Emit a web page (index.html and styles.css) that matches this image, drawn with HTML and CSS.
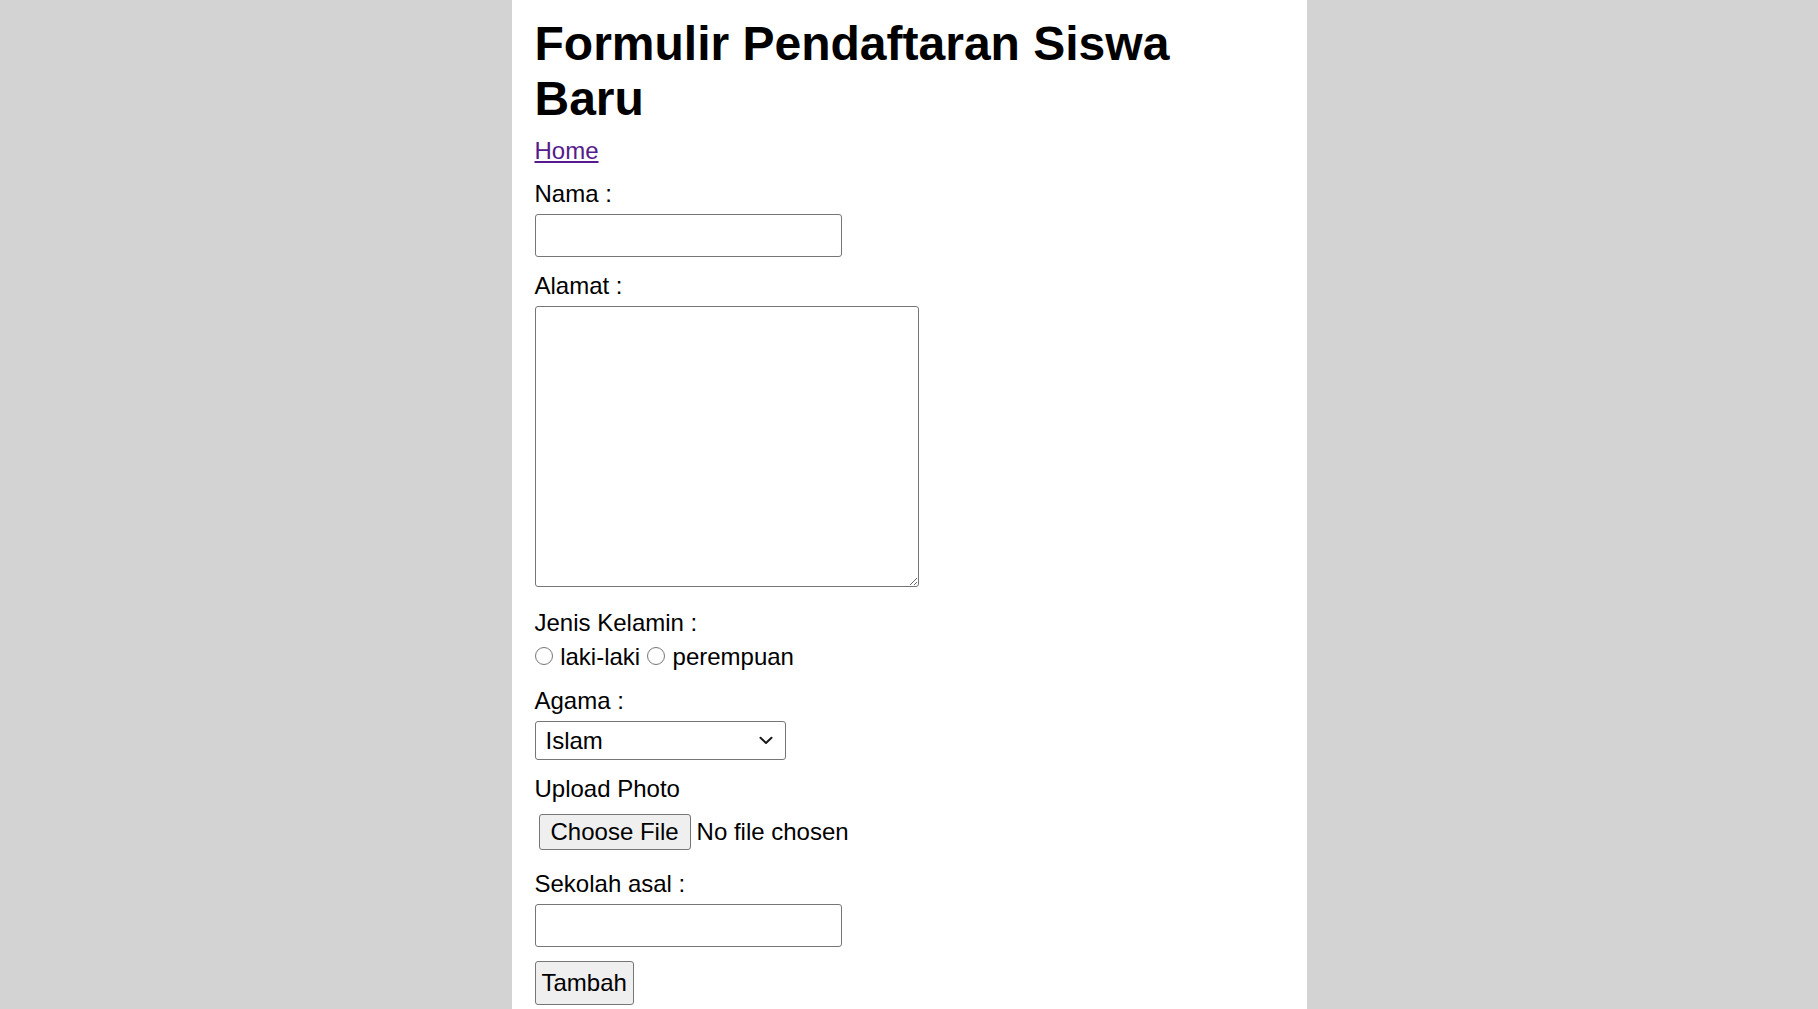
FILE: index.html
```html
<!DOCTYPE html>
<html lang="id">
<head>
<meta charset="utf-8">
<title>Formulir Pendaftaran Siswa Baru</title>
<link rel="stylesheet" href="styles.css">
</head>
<body>
<div class="page">
  <h1 class="title">Formulir Pendaftaran Siswa Baru</h1>
  <div class="nav"><a href="#">Home</a></div>
  <form class="form">
    <div class="field field-tight">
      <label class="label" for="nama">Nama :</label>
      <input class="text-input" type="text" id="nama" name="nama">
    </div>
    <div class="field field-area">
      <label class="label" for="alamat">Alamat :</label>
      <textarea class="textarea" id="alamat" name="alamat"></textarea>
    </div>
    <div class="field">
      <span class="label">Jenis Kelamin :</span>
      <div class="radios">
        <input class="radio" type="radio" name="jk" id="jk1"><label for="jk1"> laki-laki</label>
        <input class="radio" type="radio" name="jk" id="jk2"><label for="jk2"> perempuan</label>
      </div>
    </div>
    <div class="field field-tight">
      <label class="label" for="agama">Agama :</label>
      <div class="select-wrap">
        <select class="select" id="agama" name="agama">
          <option>Islam</option>
          <option>Kristen</option>
          <option>Hindu</option>
          <option>Budha</option>
        </select>
        <svg class="chevron" width="14" height="9" viewBox="0 0 14 9" aria-hidden="true">
          <path d="M1.5 1.8 L7 7 L12.5 1.8" fill="none" stroke="#1a1a1a" stroke-width="2" stroke-linecap="round" stroke-linejoin="round"/>
        </svg>
      </div>
    </div>
    <div class="field field-file">
      <label class="label" for="foto">Upload Photo</label>
      <input class="file" type="file" id="foto" name="foto">
    </div>
    <div class="field field-last">
      <label class="label" for="sekolah">Sekolah asal :</label>
      <input class="text-input" type="text" id="sekolah" name="sekolah">
    </div>
    <button class="btn" type="submit">Tambah</button>
  </form>
</div>
</body>
</html>
```

FILE: styles.css
```css
html, body {
  margin: 0;
  padding: 0;
}

body {
  background: #d3d3d3;
  font-family: "Liberation Sans", Arial, sans-serif;
  font-size: 24px;
  color: #000;
}

.page {
  width: 795px;
  margin: 0 auto;
  background: #fff;
  padding: 16px 23px 0;
  box-sizing: border-box;
  min-height: 100vh;
}

.title {
  font-size: 48px;
  font-weight: bold;
  line-height: normal;
  margin: 0 0 11px;
}

.nav {
  margin: 0 0 15px;
}

.nav a {
  color: #551a8b;
  text-decoration: underline;
}

.field {
  margin-bottom: 16px;
}

.field-tight {
  margin-bottom: 15px;
}

.field-area {
  margin-bottom: 22px;
}

.field-file {
  margin-bottom: 17px;
}

.field-last {
  margin-bottom: 14px;
}

.label {
  display: block;
}

.text-input {
  display: block;
  margin: 6px 0 0;
  width: 307px;
  height: 43px;
  box-sizing: border-box;
  border: 1px solid #767676;
  border-radius: 3px;
  padding: 0 3px;
  font: inherit;
  background: #fff;
}

.textarea {
  display: block;
  margin: 6px 0 0;
  width: 384px;
  height: 281px;
  box-sizing: border-box;
  border: 1px solid #767676;
  border-radius: 3px;
  padding: 3px;
  font: inherit;
  background: #fff;
}

.radios {
  margin-top: 6px;
}

.radio {
  width: 18px;
  height: 18px;
  margin: 0 1px 0 0;
  vertical-align: baseline;
}

.select-wrap {
  position: relative;
  width: 251px;
  margin: 6px 0 0;
}

.select {
  display: block;
  width: 251px;
  height: 39px;
  box-sizing: border-box;
  border: 1px solid #767676;
  border-radius: 3px;
  padding: 0 30px 0 10px;
  font: inherit;
  color: #000;
  background: #fff;
  appearance: none;
  -webkit-appearance: none;
}

.chevron {
  position: absolute;
  right: 13px;
  top: 15px;
  pointer-events: none;
}

.file {
  display: block;
  margin: 8px 0 0;
  padding: 3px 4px;
  font: inherit;
  color: #000;
}

.file::file-selector-button {
  font: inherit;
  height: 36px;
  padding: 0 11px;
  margin: 0 6px 0 0;
  border: 1px solid #767676;
  border-radius: 3px;
  background: #efefef;
  color: #000;
}

.btn {
  display: block;
  height: 44px;
  padding: 0 6px;
  font: inherit;
  color: #000;
  border: 1px solid #767676;
  border-radius: 3px;
  background: #efefef;
}
```
